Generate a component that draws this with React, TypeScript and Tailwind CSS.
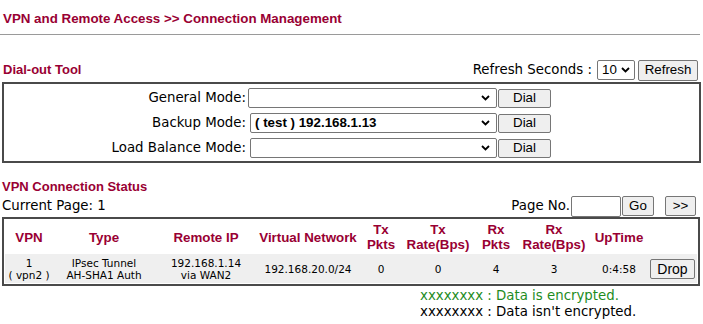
import React from 'react';

const arial = "font-['Liberation_Sans',Arial,sans-serif]";
const maroon = 'text-[#990033]';

function Chevron() {
  return (
    <svg width="9" height="6" viewBox="0 0 9 6" className="shrink-0">
      <path d="M1 1 L4.5 4.5 L8 1" fill="none" stroke="#000" strokeWidth="1.8" />
    </svg>
  );
}

function FakeSelect({ className, value, bold }: { className: string; value?: string; bold?: boolean }) {
  return (
    <div className={`flex items-center justify-between h-[20px] bg-white border border-[#767676] rounded-[2px] pl-[4px] pr-[6px] ${className}`}>
      <span className={`${arial} text-[13.33px] leading-none ${bold ? 'font-bold' : ''}`}>{value}</span>
      <Chevron />
    </div>
  );
}

function Btn({ label, className }: { label: string; className: string }) {
  return (
    <button className={`flex items-center justify-center bg-[#efefef] border border-[#767676] rounded-[2px] ${arial} text-[13.33px] leading-none text-black ${className}`}>
      {label}
    </button>
  );
}

function DialRow({ label, value, gap }: { label: string; value?: string; gap: string }) {
  return (
    <div className="flex items-center h-[20px]">
      <div className="w-[242px] text-right text-[13.33px] leading-4">{label}</div>
      <FakeSelect className={`${gap} ${gap === 'ml-[2px]' ? 'w-[249px]' : 'w-[247px]'}`} value={value} bold />
      <Btn label="Dial" className="ml-[1px] w-[53px] h-[19px]" />
    </div>
  );
}

const headers: { label: React.ReactNode; w: string }[] = [
  { label: 'VPN', w: 'w-[48px]' },
  { label: 'Type', w: 'w-[102px]' },
  { label: 'Remote IP', w: 'w-[102px]' },
  { label: 'Virtual Network', w: 'w-[102px]' },
  { label: <>Tx<br />Pkts</>, w: 'w-[44px]' },
  { label: <>Tx<br />Rate(Bps)</>, w: 'w-[70px]' },
  { label: <>Rx<br />Pkts</>, w: 'w-[46px]' },
  { label: <>Rx<br />Rate(Bps)</>, w: 'w-[70px]' },
  { label: 'UpTime', w: 'w-[60px]' },
  { label: '', w: 'w-[48px]' },
];

export default function App() {
  return (
    <div className="w-[703px] h-[324px] overflow-hidden bg-white text-black font-['DejaVu_Sans',Verdana,sans-serif]">
      {/* titulo */}
      <div className={`h-[34px] pt-[11px] pl-[3px] ${arial} font-bold text-[13.33px] leading-4 ${maroon}`}>
        VPN and Remote Access &gt;&gt; Connection Management
      </div>
      <div className="h-[1px] w-[700px] bg-[#9a9a9a]" />

      {/* Dial-out */}
      <div className="mt-[24px] h-[22px] flex items-center justify-between pl-[3px] pr-[5px]">
        <span className={`${arial} font-bold text-[13px] leading-4 ${maroon}`}>Dial-out Tool</span>
        <div className="flex items-center">
          <span className="text-[13.33px] leading-4 mr-[5px]">Refresh Seconds :</span>
          <FakeSelect className="w-[38px] !pr-[4px]" value="10" />
          <Btn label="Refresh" className="ml-[3px] w-[60px] h-[21px]" />
        </div>
      </div>
      <div className="mt-[1px] ml-[2px] w-[699px] h-[81px] border-2 border-[#4a4a4a] pt-[4px] flex flex-col gap-[5px]">
        <DialRow label="General Mode:" gap="ml-[2px]" />
        <DialRow label="Backup Mode:" value="( test ) 192.168.1.13" gap="ml-[4px]" />
        <DialRow label="Load Balance Mode:" gap="ml-[4px]" />
      </div>

      {/* estado VPN */}
      <div className={`mt-[16px] pl-[2px] ${arial} font-bold text-[13px] leading-4 ${maroon}`}>VPN Connection Status</div>
      <div className="h-[22px] flex items-center justify-between pl-[2px] pr-[7px]">
        <span className="text-[13.33px] leading-4">Current Page: 1</span>
        <div className="flex items-center">
          <span className="text-[13.33px] leading-4 mr-[1px]">Page No.</span>
          <div className="w-[50px] h-[21px] border border-[#767676] rounded-[2px] bg-white" />
          <Btn label="Go" className="ml-[1px] w-[32px] h-[20px]" />
          <Btn label=">>" className="ml-[11px] w-[31px] h-[20px]" />
        </div>
      </div>
      <div className="ml-[2px] w-[698px] border-2 border-[#4a4a4a] p-[1px]">
        <table className="table-fixed border-collapse w-[692px]">
          <thead>
            <tr className="h-[34px]">
              {headers.map((h, i) => (
                <th key={i} className={`${h.w} p-0 text-center align-middle ${arial} font-bold text-[13.33px] leading-[15px] ${maroon}`}>
                  {h.label}
                </th>
              ))}
            </tr>
          </thead>
          <tbody>
            <tr className="h-[29px] bg-[#efefef] text-[10.5px] leading-[12px] text-center">
              <td className="p-0">1<br />( vpn2 )</td>
              <td className="p-0">IPsec Tunnel<br />AH-SHA1 Auth</td>
              <td className="p-0">192.168.1.14<br />via WAN2</td>
              <td className="p-0">192.168.20.0/24</td>
              <td className="p-0">0</td>
              <td className="p-0">0</td>
              <td className="p-0">4</td>
              <td className="p-0">3</td>
              <td className="p-0">0:4:58</td>
              <td className="p-0">
                <Btn label="Drop" className="ml-[1px] w-[45px] h-[20px] text-[14px]" />
              </td>
            </tr>
          </tbody>
        </table>
      </div>

      {/* leyenda */}
      <div className="mt-[2px] pl-[420px] text-[13.33px] leading-4">
        <div className="text-[#1e8c1e]">xxxxxxxx : Data is encrypted.</div>
        <div>xxxxxxxx : Data isn't encrypted.</div>
      </div>
    </div>
  );
}
